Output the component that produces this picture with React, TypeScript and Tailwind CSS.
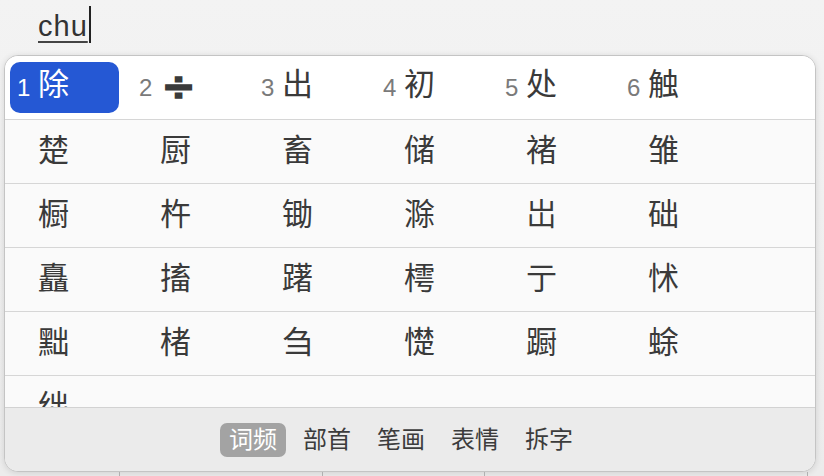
import React from 'react';

const candidates = ['除', '÷', '出', '初', '处', '触'];

const rows = [
  ['楚', '厨', '畜', '储', '褚', '雏'],
  ['橱', '杵', '锄', '滁', '岀', '础'],
  ['矗', '搐', '躇', '樗', '亍', '怵'],
  ['黜', '楮', '刍', '憷', '蹰', '蜍'],
  ['绌'],
];

const tabs = ['词频', '部首', '笔画', '表情', '拆字'];

const font = { fontFamily: '"Liberation Sans", "Noto Sans CJK SC", sans-serif' };

export default function App() {
  return (
    <div
      className="w-[824px] h-[476px] overflow-hidden bg-gradient-to-b from-[#f3f3f3] to-[#ececec] flex flex-col text-[#3c3c3c]"
      style={font}
    >
      {/* typed pinyin */}
      <div className="h-[56px] pl-[38px] pt-[6px] flex items-start">
        <span className="text-[29px] leading-[38px] pt-[1px] tracking-[1px] text-[#333] underline decoration-[#444] decoration-2 underline-offset-[5px]">
          chu
        </span>
        <span className="w-[2px] h-[37px] bg-[#222] ml-[1px]"></span>
      </div>

      {/* candidate panel */}
      <div className="ml-[4px] w-[812px] h-[417px] shrink-0 rounded-[14px] border border-[#c4c4c4] bg-[#fafafa] shadow-[0_1px_6px_rgba(0,0,0,0.12)] overflow-hidden flex flex-col">
        {/* first row */}
        <div className="h-[63px] shrink-0 bg-white flex items-center pl-[5px]">
          {candidates.map((c, i) => (
            <div key={c} className="w-[122px] shrink-0">
              <div
                className={
                  i === 0
                    ? 'w-[109px] h-[51px] rounded-[10px] bg-[#2558d4] text-white flex items-center pl-[7px]'
                    : 'w-[109px] h-[51px] flex items-center pl-[7px]'
                }
              >
                <span
                  className={
                    i === 0
                      ? 'w-[21px] text-[24px] text-white'
                      : 'w-[21px] text-[24px] text-[#7a7a7a]'
                  }
                >
                  {i + 1}
                </span>
                {c === '÷' ? (
                  <span className="ml-[7px] text-[42px] font-bold leading-none text-[#3a3a3a] scale-x-[1.2] [-webkit-text-stroke:1.5px_#3a3a3a]">÷</span>
                ) : (
                  <span className={i === 0 ? 'text-[31px] leading-none -mt-[6px] text-white' : 'text-[31px] leading-none -mt-[6px] text-[#3a3a3a]'}>
                    {c}
                  </span>
                )}
              </div>
            </div>
          ))}
        </div>

        {/* grid */}
        <div className="flex-1 overflow-hidden flex flex-col">
          {rows.map((r, ri) => (
            <div key={ri} className="h-[64px] shrink-0 border-t border-[#d6d6d6] flex items-center pl-[5px]">
              {r.map((c) => (
                <div key={c} className="w-[122px] shrink-0 pl-[28px] text-[31px] leading-none text-[#3a3a3a] -mt-[3px]">
                  {c}
                </div>
              ))}
            </div>
          ))}
        </div>

        {/* toolbar */}
        <div className="h-[64px] shrink-0 border-t border-[#d2d2d2] bg-[#ebebeb] flex items-center gap-[8px] pl-[215px]">
          {tabs.map((t, i) => (
            <div
              key={t}
              className={
                i === 0
                  ? 'h-[34px] px-[9px] rounded-[7px] bg-[#a3a3a3] text-white text-[24px] leading-none flex items-center'
                  : 'h-[34px] px-[9px] text-[24px] leading-none text-[#3c3c3c] flex items-center'
              }
            >
              {t}
            </div>
          ))}
        </div>
      </div>

      {/* page beneath, peeking out */}
      <div className="h-[4px] flex">
        <div className="w-[120px] border-r border-[#b0b0b0]"></div>
        <div className="w-[203px] border-r border-[#b0b0b0]"></div>
        <div className="w-[162px] border-r border-[#b0b0b0]"></div>
        <div className="w-[323px] border-r border-[#b0b0b0]"></div>
      </div>
    </div>
  );
}
